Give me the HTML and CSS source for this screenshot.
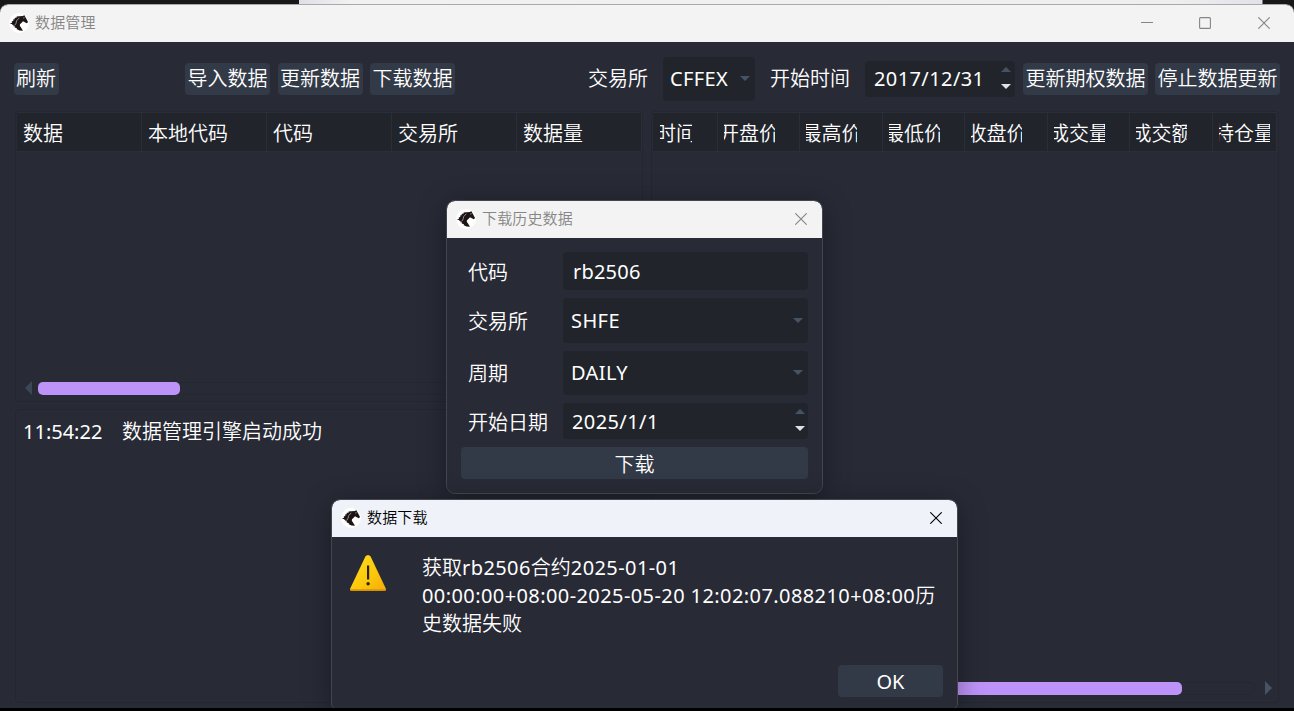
FILE: index.html
```html
<!DOCTYPE html>
<html lang="zh-CN">
<head>
<meta charset="utf-8">
<title>数据管理</title>
<link rel="stylesheet" href="styles.css">
</head>
<body>
<svg class="defs" width="0" height="0">
  <symbol id="horse" viewBox="0 0 20 20">
    <circle cx="10" cy="10" r="10" fill="#fff"/>
    <path fill="#1d1515" d="M.8 11 3.200 9.400 2.600 8.800 4.600 7.600 3.900 6.700 6 6 5.400 5 7.800 4.500 7.600 3.500 10.200 3.300 14.400 2.900 15 1.700 16.200 3.700 17.200 5.500 19 9 17.900 10.300 16.300 9.500 14 8.300 12.900 9.600 11 11.200 10.800 12.800 12 14.600 14 17.800 10.500 17.600 7.400 16 8.200 15.200 5.600 14.400 6.200 13.500 3.900 12.900 5 11.900 2.900 11.800 3.500 10.900Z"/>
    <path fill="none" stroke="#e4dfdf" stroke-width=".6" d="M10.300 4.800 7.700 7.600 6.900 10.600 5.600 12.500M14.200 5l1.400-.2"/>
  </symbol>
  <symbol id="close" viewBox="0 0 12 12">
    <path fill="none" stroke="currentColor" stroke-width="1.100" d="M.3.3 11.700 11.700M11.700.3.3 11.700"/>
  </symbol>
</svg>
<div class="desktop"></div>
<div class="window">
  <header class="titlebar">
    <svg class="logo"><use href="#horse"/></svg>
    <span class="title">数据管理</span>
    <svg class="min" viewBox="0 0 12 12"><path stroke="currentColor" d="M0 5.500h12"/></svg>
    <svg class="max" viewBox="0 0 12 12"><rect x=".6" y=".6" width="10.800" height="10.800" rx="1" fill="none" stroke="currentColor" stroke-width="1.100"/></svg>
    <svg class="close"><use href="#close"/></svg>
  </header>
  <div class="toolbar">
    <div class="tools tools-left">
      <button class="btn refresh">刷新</button>
      <button class="btn">导入数据</button>
      <button class="btn">更新数据</button>
      <button class="btn">下载数据</button>
    </div>
    <div class="tools tools-right">
      <span class="label">交易所</span>
      <div class="field combo exchange"><span>CFFEX</span><i class="down"></i></div>
      <span class="label">开始时间</span>
      <div class="field date start"><span>2017/12/31</span><b class="spin"><i class="up"></i><i class="down on"></i></b></div>
      <button class="btn wide">更新期权数据</button>
      <button class="btn wide last">停止数据更新</button>
    </div>
  </div>
  <main class="panes">
    <div class="left">
      <section class="panel table">
        <div class="head">
          <span>数据</span><span>本地代码</span><span>代码</span><span>交易所</span><span>数据量</span>
        </div>
        <div class="scroll"><i class="arrow-left"></i><div class="track"><div class="thumb"></div></div></div>
      </section>
      <section class="panel log"><span class="time">11:54:22</span><span>数据管理引擎启动成功</span></section>
    </div>
    <section class="panel bars">
      <div class="head narrow">
        <span class="first"><em>时间</em></span><span><em>开盘价</em></span><span><em>最高价</em></span><span><em>最低价</em></span><span><em>收盘价</em></span><span><em>成交量</em></span><span><em>成交额</em></span><span><em>持仓量</em></span>
      </div>
      <div class="scroll"><div class="track"><div class="thumb long"></div></div><i class="arrow-right"></i></div>
    </section>
  </main>
</div>

<div class="dialog download">
  <header class="titlebar">
    <svg class="logo"><use href="#horse"/></svg>
    <span class="title">下载历史数据</span>
    <svg class="close"><use href="#close"/></svg>
  </header>
  <div class="form">
    <label>代码</label><div class="field code"><span>rb2506</span></div>
    <label>交易所</label><div class="field combo"><span>SHFE</span><i class="down"></i></div>
    <label>周期</label><div class="field combo"><span>DAILY</span><i class="down"></i></div>
    <label>开始日期</label><div class="field date"><span>2025/1/1</span><b class="spin"><i class="up"></i><i class="down on"></i></b></div>
    <button class="btn submit">下载</button>
  </div>
</div>

<div class="dialog message">
  <header class="titlebar active">
    <svg class="logo"><use href="#horse"/></svg>
    <span class="title">数据下载</span>
    <svg class="close"><use href="#close"/></svg>
  </header>
  <div class="content">
    <svg class="warn" viewBox="0 0 38 38">
      <defs><linearGradient id="g" x1="0" y1="0" x2="1" y2="1"><stop offset="0" stop-color="#ffe11c"/><stop offset=".6" stop-color="#fcc60a"/><stop offset="1" stop-color="#f5aa08"/></linearGradient></defs>
      <path fill="url(#g)" d="M16.400 2.600Q19-.8 21.600 2.600L36.800 34.500Q37.600 37 35 37H3Q.4 37 1.200 34.500Z"/>
      <path fill="#d99009" d="M1 35.200H37Q37 37 35 37H3Q1 37 1 35.200Z"/>
      <path fill="#28230f" d="M18 11.500h2.200v14H18z"/><circle cx="19.100" cy="29.700" r="1.700" fill="#28230f"/>
    </svg>
    <p class="text">获取<b>rb2506</b>合约<b>2025-01-01</b><br><b>00:00:00+08:00-2025-05-20 12:02:07.088210+08:00</b>历<br>史数据失败</p>
  </div>
  <button class="btn ok">OK</button>
</div>
</body>
</html>
```
FILE: styles.css
```css
* { box-sizing: border-box; }
body {
  margin: 0;
  width: 1294px;
  height: 711px;
  overflow: hidden;
  position: relative;
  display: flex;
  flex-direction: column;
  background: #000;
  color: #fff;
  font: 350 20px/28px "Noto Sans", "Noto Sans CJK SC", sans-serif;
}
.defs { position: absolute; }
.desktop {
  height: 13px;
  margin-bottom: -8px;
  background: linear-gradient(90deg, #181818 299px, #dfe0e6 299px, #f1f1f1 350px, #eeeeef 1180px, #e1e2e8 1262px, #181818 1263px);
}
.window {
  height: 703px;
  display: flex;
  flex-direction: column;
  border-radius: 8px 8px 0 0;
  background: #282a36;
  overflow: hidden;
  box-shadow: 0 0 0 1px #aaa;
  clip-path: inset(-1px 0 0 0 round 8px 8px 0 0);
}
.titlebar {
  height: 37px;
  flex: none;
  display: flex;
  align-items: center;
  padding: 0 24px 1px 9px;
  background: #f3f3f3;
  color: #858585;
  font-size: 15px;
}
.title { flex: 1; margin-left: 6px; padding-bottom: 2px; line-height: 20px; letter-spacing: .15px; }
.logo { width: 20px; height: 20px; }
.min, .max, .close { width: 12px; height: 12px; }
.max { margin: 0 47px 0 46px; }
.toolbar {
  height: 69px;
  flex: none;
  display: flex;
  justify-content: space-between;
  padding: 4px 14px 0;
}
.tools { display: flex; align-items: center; }
.tools-left { gap: 7.5px; }
.btn {
  height: 32px;
  padding: 1px 0 0;
  border: 0;
  border-radius: 4px;
  background: #333a47;
  color: inherit;
  font: inherit;
  width: 85px;
  white-space: nowrap;
}
.refresh { width: 45px; margin-right: 118.5px; padding-right: 1px; }
.wide { width: 125px; }
.last { margin-left: 7px; }
.label { white-space: nowrap; padding-top: 1px; }
.field {
  display: flex;
  align-items: center;
  justify-content: space-between;
  background: #21252b;
  border-radius: 4px;
  font-weight: 400;
  letter-spacing: .4px;
}
.exchange { width: 92px; height: 44px; margin: 0 15px; padding: 0 5px 0 7px; }
.start { width: 150px; height: 36px; margin: 0 8px 0 15px; padding: 0 4px 0 9px; }
.down, .up { width: 0; height: 0; border: solid transparent; border-width: 0 5px; }
.down { border-top: 5px solid #455364; }
.up { border-bottom: 5px solid #455364; }
.down.on { border-top-color: #e0e1e3; }
.spin { display: flex; flex-direction: column; gap: 12px; margin-top: -2px; }
.panes {
  flex: 1;
  min-height: 0;
  display: flex;
  gap: 8px;
  padding: 0 15px 5px;
}
.left { width: 628px; display: flex; flex-direction: column; gap: 7px; }
.panel { border: 1px solid #242631; border-radius: 4px; }
.table { height: 291px; display: flex; flex-direction: column; justify-content: space-between; }
.bars { width: 628px; display: flex; flex-direction: column; justify-content: space-between; padding-bottom: 1px; }
.head {
  display: grid;
  grid-template-columns: repeat(5, 125px);
  height: 40px;
  border-top: 1px solid #2a2e38;
  border-bottom: 1px solid #2a2e38;
  background: #21242b;
  margin: 0 1px;
}
.head span { padding: 7px 0 0 6px; border-right: 1px solid #2a2e38; }
.narrow { grid-template-columns: 64.500px repeat(6, 82.500px) 1fr; }
.narrow span { padding-left: 6px; }
.narrow em {
  display: flex;
  justify-content: center;
  width: 51px;
  overflow: hidden;
  font-style: normal;
  white-space: nowrap;
}
.narrow .first { padding-left: 7px; }
.narrow .first em { width: 32px; }
.scroll { height: 26px; display: flex; align-items: center; gap: 7px; padding: 0 7px 0 9px; }
.track { flex: 1; height: 13px; border: 1px solid #252731; border-radius: 5px; }
.thumb { width: 142px; height: 13px; margin: -1px -1px -1px -2px; border-radius: 5px; background: #bd93f9; }
.bars .track { margin-right: 3px; }
.bars .scroll { padding-right: 6px; }
.long { width: 522px; }
.arrow-left, .arrow-right { border: solid transparent; border-width: 7px 0; }
.arrow-left { border-right: 7px solid #3b4755; }
.arrow-right { border-left: 7px solid #455364; }
.log { flex: 1; display: flex; align-items: flex-start; padding: 8px 0 0 7px; }
.time { width: 99px; font-weight: 400; }
.dialog {
  position: absolute;
  background: #282a36;
  overflow: hidden;
  outline: 1px solid #44464f;
  box-shadow: 0 4px 28px rgba(0, 0, 0, .38);
}
.download { left: 447px; top: 201px; width: 375px; height: 292px; border-radius: 8px; }
.dialog .titlebar { padding-right: 15px; }
.form {
  display: grid;
  grid-template-columns: 95px 245px;
  grid-template-rows: 38px 44.5px 44.5px 36px 32px;
  row-gap: 8px;
  align-items: center;
  padding: 14px 14px 0 21px;
}
.form label { padding-top: 3px; }
.form .field { height: 100%; padding: 0 5px 0 8px; }
.form .field span { padding-top: 1px; }
.form .code { padding-left: 10px; letter-spacing: .2px; }
.form .date { padding: 0 3px 0 9px; }
.submit { grid-column: 1 / 3; margin-left: -7px; width: 347px; padding-top: 3px; }
.message { left: 332px; top: 500px; width: 625px; height: 208px; border-radius: 8px 8px 4px 4px; clip-path: inset(-40px -40px 0 -40px); }
.titlebar.active { background: #eff3f9; color: #000; }
.content { display: flex; height: 128px; padding-left: 17px; }
.warn { width: 38px; height: 38px; margin-top: 17px; }
.text { margin: 17px 0 0 35px; white-space: nowrap; }
.text b { font-weight: 400; letter-spacing: .41px; }
.ok { display: block; width: 105px; margin-left: 506px; font-weight: 400; padding-top: 2px; }
```
